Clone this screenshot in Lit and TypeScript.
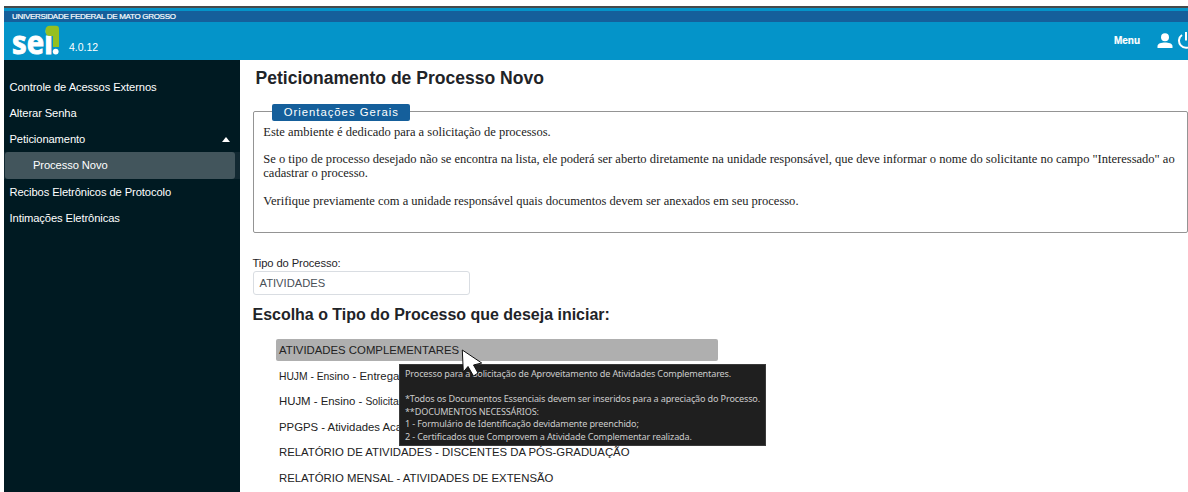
import { LitElement, html, css } from "lit";
import { customElement } from "lit/decorators.js";

@customElement("sei-header")
class SeiHeader extends LitElement {
  static styles = css`
    :host { display: block; box-sizing: border-box; margin-left: 4px; color: #fff; background: #0494c9; border-top: 2px solid #45494b; height: 54px; }
    .org { margin-top: 3px; height: 11px; background: #155f9b; font-size: 8px; line-height: 12px; padding-left: 8px; white-space: nowrap; letter-spacing: -0.3px; -webkit-text-stroke: 0.2px #fff; }
    .bar { display: flex; height: 38px; align-items: flex-start; }
    .logo { display: block; margin: 2px 0 0 7px; overflow: visible; }
    .logo text { font-family: "Open Sans", sans-serif; font-weight: 700; }
    .version { font-size: 10.5px; line-height: 13px; margin: 19px 0 0 8px; }
    .menu { margin: 12px 0 0 auto; font-size: 10px; line-height: 14px; font-weight: bold; -webkit-text-stroke: 0.2px #fff; }
    .user { margin: 11px 0 0 17px; }
    .power { margin: 8px -7px 0 4px; clip-path: inset(0 7px 0 0); }
  `;
  render() {
    return html`
      <div class="org">UNIVERSIDADE FEDERAL DE MATO GROSSO</div>
      <div class="bar">
        <svg class="logo" width="50" height="34" viewBox="0 0 50 34">
          <text x="1" y="29.6" font-size="32" fill="#fff" stroke="#fff" stroke-width="0.9" textLength="41" lengthAdjust="spacingAndGlyphs">sei</text>
          <path d="M39 1.8H45Q48 1.8 48 5V23H42V12H39Q34.4 12 34.4 6.9T39 1.8Z" fill="#95bf20" />
          <circle cx="44.7" cy="27.6" r="2.9" fill="#fff" />
        </svg>
        <span class="version">4.0.12</span>
        <span class="menu">Menu</span>
        <svg class="user" width="16" height="16" viewBox="0 0 16 16" fill="#fff">
          <circle cx="8" cy="4.2" r="4" /><path d="M0.5 15V13C0.5 10.5 4.5 9.4 8 9.4S15.5 10.5 15.5 13V15Z" />
        </svg>
        <svg class="power" width="18" height="20" viewBox="0 0 18 20" fill="none" stroke="#fff" stroke-width="2">
          <path d="M9 2V10.5M5 5A7 7 0 1 0 13 5" />
        </svg>
      </div>`;
  }
}

@customElement("sei-sidebar")
class SeiSidebar extends LitElement {
  static styles = css`
    :host { display: block; box-sizing: border-box; width: 236px; background: #001a22; color: #fff; padding-top: 13.7px; font-size: 11.2px; letter-spacing: -0.1px; }
    .item { display: flex; align-items: center; justify-content: space-between; height: 26.2px; padding: 0 10px 0 5.5px; white-space: nowrap; }
    .arrow { width: 0; border: 4.5px solid transparent; border-top: 0; border-bottom: 5px solid #fff; }
    .wrap { background: #122932; padding: 0 5px 0 1px; }
    .sub { height: 26.25px; line-height: 26px; box-sizing: border-box; border-radius: 3px; background: #42555c; padding-left: 28px; }
  `;
  render() {
    return html`
      <div class="item">Controle de Acessos Externos</div>
      <div class="item">Alterar Senha</div>
      <div class="item">Peticionamento<i class="arrow"></i></div>
      <div class="wrap"><div class="sub">Processo Novo</div></div>
      <div class="item">Recibos Eletrônicos de Protocolo</div>
      <div class="item">Intimações Eletrônicas</div>`;
  }
}

@customElement("app-root")
class AppRoot extends LitElement {
  static styles = css`
    :host { display: block; box-sizing: border-box; position: relative; width: 1188px; height: 492px; padding-top: 6px; overflow: hidden; background: #fff; font-family: "Liberation Sans", Arial, sans-serif; color: #1f2428; }
    .body { display: flex; height: 432px; margin-left: 4px; }
    sei-sidebar { flex: none; }
    main { flex: 1; min-width: 0; padding-left: 12.5px; white-space: nowrap; }
    h1 { margin: 7px 0 0 3px; font-size: 17.55px; line-height: 22px; }
    .box { box-sizing: border-box; height: 122px; margin-top: 22px; border: 1px solid #949494; border-radius: 2px; padding: 0 0 0 9.8px; font: 12.53px/14px "Liberation Serif", serif; color: #222; }
    .legend { display: block; width: 138px; height: 17px; margin: -8px 0 0 9px; border-radius: 2px; background: #155f9b; color: #fff; text-align: center; font: 11.3px/17px "Liberation Sans", sans-serif; letter-spacing: 1px; }
    p { margin: 0 0 13px; }
    .legend + p { margin-top: 4px; }
    p:last-child { margin-top: 14px; }
    label { display: block; margin-top: 23px; font-size: 11.2px; line-height: 15px; letter-spacing: -0.1px; }
    .field { box-sizing: border-box; width: 217px; height: 24px; border: 1px solid #d9dde2; border-radius: 3px; padding-left: 6px; font-size: 11.2px; line-height: 22px; color: #495057; }
    h2 { margin: 10px 0 0; font-size: 15.98px; line-height: 20px; }
    .list { margin: 14px 0 0 23.5px; width: 441.5px; font-size: 11.37px; color: #222; }
    .row { height: 21.6px; line-height: 23px; margin-bottom: 4px; padding-left: 3px; border-radius: 2px; }
    .on { background: #afafaf; }
    .small { font-size: 10.3px; }
    .tip { position: absolute; left: 399px; top: 364px; box-sizing: border-box; width: 367px; height: 82px; border: 1px solid #3a3a3a; background: #1f1f1f; color: #ccc; padding: 3px 5px; font: 9.1px/12.5px "Noto Sans", sans-serif; letter-spacing: -0.15px; white-space: pre; }
    .cursor { position: absolute; left: 460px; top: 348px; }
  `;
  render() {
    return html`
      <sei-header></sei-header>
      <div class="body">
        <sei-sidebar></sei-sidebar>
        <main>
          <h1>Peticionamento de Processo Novo</h1>
          <section class="box">
            <span class="legend">Orientações Gerais</span>
            <p>Este ambiente é dedicado para a solicitação de processos.</p>
            <p>Se o tipo de processo desejado não se encontra na lista, ele poderá ser aberto diretamente na unidade responsável, que deve informar o nome do solicitante no campo "Interessado" ao<br />cadastrar o processo.</p>
            <p>Verifique previamente com a unidade responsável quais documentos devem ser anexados em seu processo.</p>
          </section>
          <label>Tipo do Processo:</label>
          <div class="field">ATIVIDADES</div>
          <h2>Escolha o Tipo do Processo que deseja iniciar:</h2>
          <div class="list">
            <div class="row on">ATIVIDADES COMPLEMENTARES</div>
            <div class="row"><span class="small">HUJM - Ensi</span>no - Entrega</div>
            <div class="row">HUJM - Ensino - <span class="small">Solicitaç</span></div>
            <div class="row">PPGPS - Atividades Aca</div>
            <div class="row">RELATÓRIO DE ATIVIDADES - DISCENTES DA PÓS-GRADUAÇÃO</div>
            <div class="row">RELATÓRIO MENSAL - ATIVIDADES DE EXTENSÃO</div>
          </div>
        </main>
      </div>
      <div class="tip">Processo para a Solicitação de Aproveitamento de Atividades Complementares.

*Todos os Documentos Essenciais devem ser inseridos para a apreciação do Processo.
**DOCUMENTOS NECESSÁRIOS:
1 - Formulário de Identificação devidamente preenchido;
2 - Certificados que Comprovem a Atividade Complementar realizada.</div>
      <svg class="cursor" width="24" height="30" viewBox="0 0 24 30">
        <path d="M2.3 2L3.3 24L8 18.5L13.5 28L18 25L13.5 17L21.7 15Z" fill="#fff" stroke="#111" stroke-width="1" />
      </svg>`;
  }
}
